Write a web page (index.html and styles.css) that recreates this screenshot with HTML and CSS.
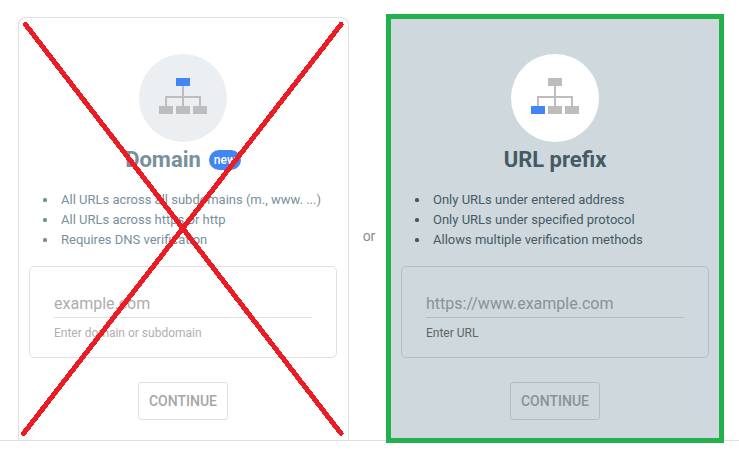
FILE: index.html
```
<!DOCTYPE html>
<html lang="en">
<head>
<meta charset="utf-8">
<title>Select property type</title>
<link rel="stylesheet" href="styles.css">
</head>
<body>
<main class="chooser">
  <section class="card card-domain">
    <div class="circle">
      <svg width="48" height="36" viewBox="0 0 48 36" shape-rendering="crispEdges">
        <path class="node" d="M6 18h36v10h-2v-8H8v8H6zM23 8h2v20h-2zM0 28h14v8H0zM17 28h14v8H17zM34 28h14v8H34z"/>
        <path class="active" d="M17 0h14v8H17z"/>
      </svg>
    </div>
    <h2 class="title"><span class="name">Domain</span><span class="badge">new</span></h2>
    <ul class="features">
      <li>All URLs across all subdomains (m., www. ...)</li>
      <li>All URLs across https or http</li>
      <li>Requires DNS verification</li>
    </ul>
    <div class="field">
      <div class="input">example.com</div>
      <div class="hint">Enter domain or subdomain</div>
    </div>
    <button class="continue">CONTINUE</button>
    <svg class="cross" width="331" height="424" viewBox="0 0 331 424" shape-rendering="crispEdges">
      <path d="M7.5 7.5L323 416.5M323 7.5L5.5 416.5"/>
    </svg>
  </section>
  <div class="or">or</div>
  <section class="card card-prefix">
    <div class="circle">
      <svg width="48" height="36" viewBox="0 0 48 36" shape-rendering="crispEdges">
        <path class="node" d="M6 18h36v10h-2v-8H8v8H6zM23 8h2v20h-2zM17 0h14v8H17zM17 28h14v8H17zM34 28h14v8H34z"/>
        <path class="active" d="M0 28h14v8H0z"/>
      </svg>
    </div>
    <h2 class="title"><span class="name">URL prefix</span></h2>
    <ul class="features">
      <li>Only URLs under entered address</li>
      <li>Only URLs under specified protocol</li>
      <li>Allows multiple verification methods</li>
    </ul>
    <div class="field">
      <div class="input">https://www.example.com</div>
      <div class="hint">Enter URL</div>
    </div>
    <button class="continue">CONTINUE</button>
  </section>
</main>
</body>
</html>
```
FILE: styles.css
```
* { box-sizing: border-box; }
body {
  min-height: 454px;
  margin: 0;
  background: #fff;
  font-family: Roboto, "Liberation Sans", sans-serif;
}
.chooser {
  display: flex;
  align-items: flex-start;
  height: 441px;
  padding: 14px 15px 0 18px;
  border-bottom: 1px solid #e0e0e0;
}
.card {
  display: flex;
  flex-direction: column;
  align-items: flex-start;
  flex: none;
}
.card-domain {
  position: relative;
  width: 331px;
  height: 423px;
  margin-top: 3px;
  padding: 36px 10px 0;
  border: 1px solid #e0e0e0;
  border-bottom: 0;
  border-radius: 8px 8px 0 0;
  color: #78909c;
}
.card-prefix {
  width: 338px;
  height: 429px;
  padding: 35px 10px 0;
  border: 5px solid #22b14c;
  background: #cfd8dd;
  color: #455a64;
}
.circle {
  display: flex;
  align-items: center;
  justify-content: center;
  width: 88px;
  height: 88px;
  margin-left: 110px;
  padding-bottom: 4px;
  border-radius: 50%;
  background: #eceff1;
}
.card-prefix .circle { background: #fff; }
.node { fill: #bdbdbd; }
.active { fill: #4285f4; }
.title {
  display: flex;
  align-items: center;
  justify-content: center;
  gap: 8px;
  width: 308px;
  height: 36px;
  margin: 0;
  font-size: 22px;
  font-weight: 700;
}
.name { padding-bottom: 2px; }
.badge {
  height: 20px;
  padding: 0 5px;
  border-radius: 10px;
  background: #4285f4;
  color: #fff;
  font-size: 12px;
  font-weight: 500;
  line-height: 20px;
}
.features {
  width: 308px;
  height: 88px;
  margin: 0;
  padding: 12px 0 0 14px;
  font-size: 13px;
  line-height: 20px;
  list-style: none;
  white-space: nowrap;
}
.features li {
  display: flex;
  align-items: center;
  gap: 14px;
}
.features li::before {
  content: "";
  width: 4px;
  height: 4px;
  border-radius: 1.5px;
  background: currentColor;
}
.field {
  width: 308px;
  height: 92px;
  padding: 23px 24px 0;
  border: 1px solid #e0e0e0;
  border-radius: 5px;
}
.input {
  height: 28px;
  border-bottom: 1px solid #e0e0e0;
  color: #adadad;
  font-size: 16px;
  line-height: 28px;
}
.hint {
  margin-top: 7px;
  color: #b0b0b0;
  font-size: 12px;
  line-height: 16px;
}
.continue {
  width: 90px;
  height: 38px;
  margin: 24px 0 0 109px;
  padding: 0;
  border: 1px solid #e0e0e0;
  border-radius: 3px;
  background: transparent;
  color: #a6a6a6;
  font: 500 14px Roboto, "Liberation Sans", sans-serif;
}
.card-prefix .field,
.card-prefix .input,
.card-prefix .continue { border-color: #b5bdbf; }
.card-prefix .input,
.card-prefix .continue { color: #8b9295; }
.card-prefix .hint { color: #5f6568; }
.or {
  width: 37px;
  padding: 214px 0 0 3px;
  color: #8c8c8c;
  font-size: 14px;
  line-height: 16px;
  text-align: center;
}
.cross {
  position: absolute;
  top: -1px;
  left: -1px;
  fill: none;
  stroke: #ed1c24;
  stroke-width: 5;
  stroke-linecap: round;
}
```
